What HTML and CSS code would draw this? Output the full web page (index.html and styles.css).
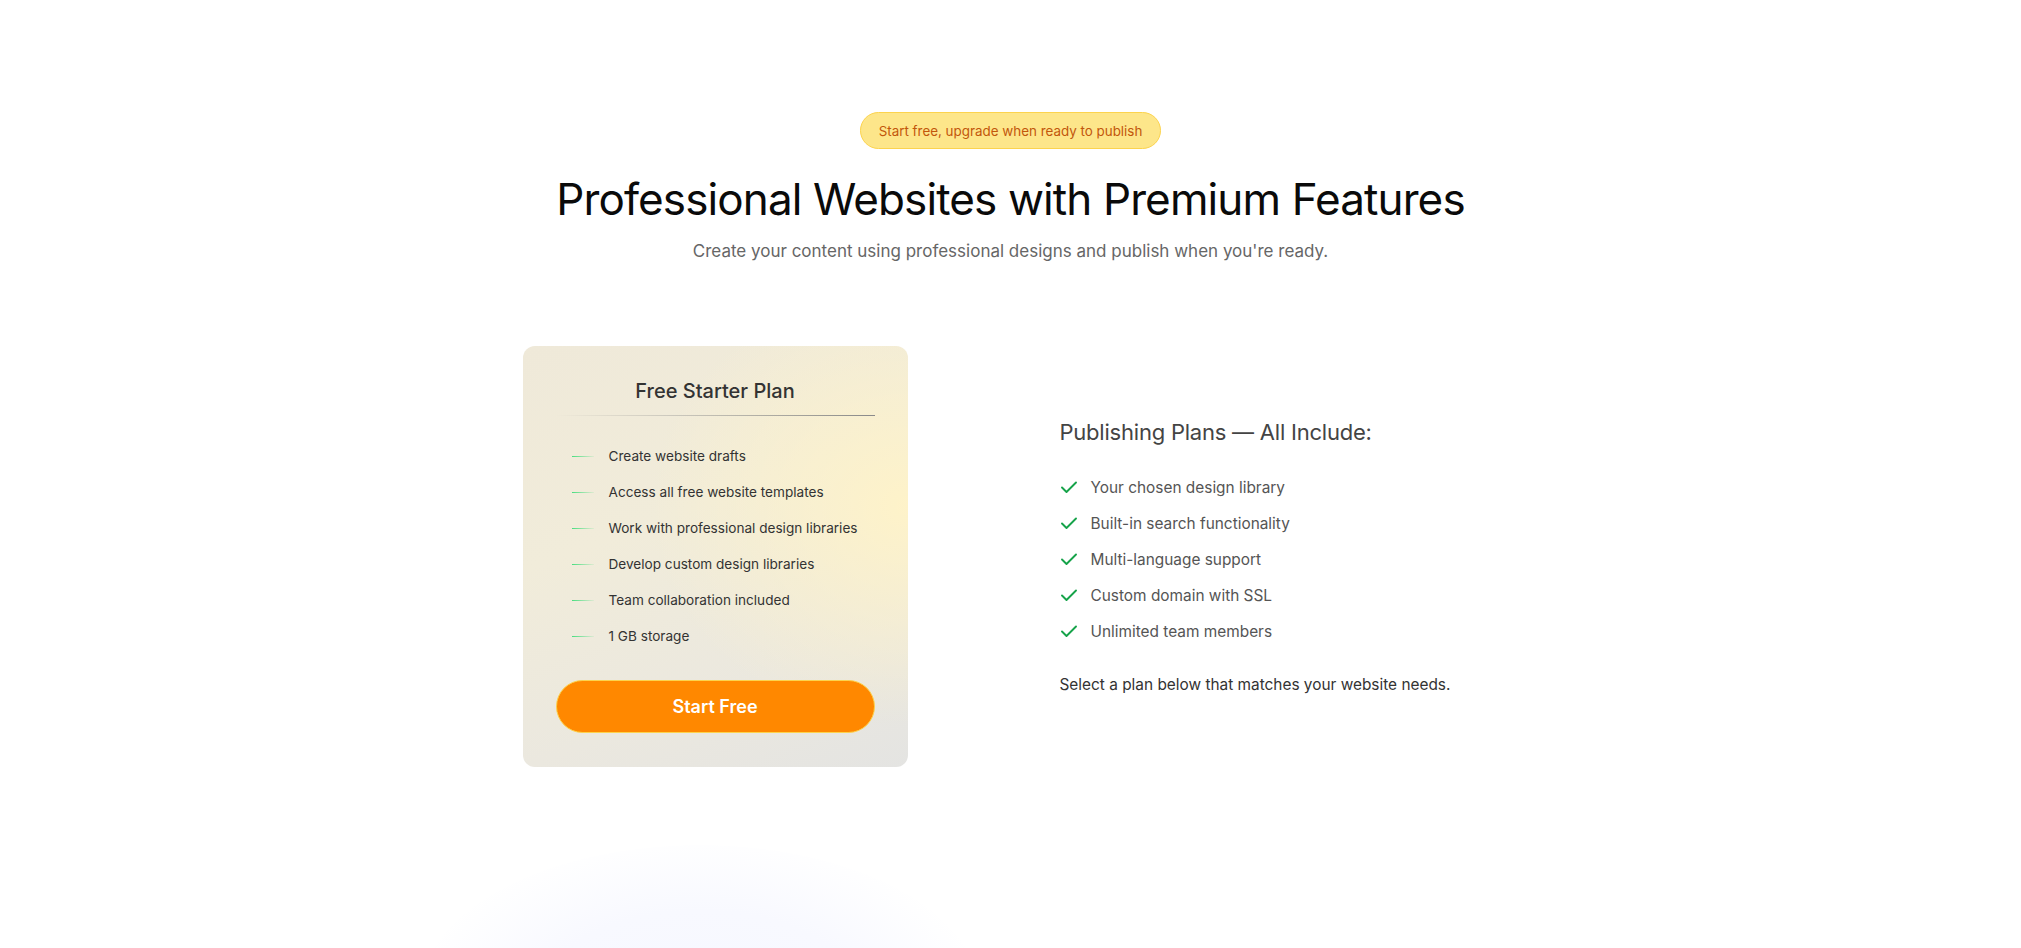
FILE: index.html
```html
<!DOCTYPE html>
<html lang="en">
<head>
<meta charset="utf-8">
<title>Pricing</title>
<link rel="stylesheet" href="styles.css">
</head>
<body>
<main class="page">
  <header class="hero">
    <span class="badge">Start free, upgrade when ready to publish</span>
    <h1 class="title">Professional Websites with Premium Features</h1>
    <p class="subtitle">Create your content using professional designs and publish when you're ready.</p>
  </header>

  <section class="plans">
    <div class="card">
      <h2 class="card-title">Free Starter Plan</h2>
      <div class="card-rule"></div>
      <ul class="card-list">
        <li><span class="dash"></span>Create website drafts</li>
        <li><span class="dash"></span>Access all free website templates</li>
        <li><span class="dash"></span>Work with professional design libraries</li>
        <li><span class="dash"></span>Develop custom design libraries</li>
        <li><span class="dash"></span>Team collaboration included</li>
        <li><span class="dash"></span>1 GB storage</li>
      </ul>
      <button class="cta">Start Free</button>
    </div>

    <div class="include">
      <h3 class="include-title">Publishing Plans — All Include:</h3>
      <ul class="include-list">
        <li><svg class="check" viewBox="0 0 16 12"><path d="M1 6.5l4.5 4.5L15 1.5"/></svg>Your chosen design library</li>
        <li><svg class="check" viewBox="0 0 16 12"><path d="M1 6.5l4.5 4.5L15 1.5"/></svg>Built-in search functionality</li>
        <li><svg class="check" viewBox="0 0 16 12"><path d="M1 6.5l4.5 4.5L15 1.5"/></svg>Multi-language support</li>
        <li><svg class="check" viewBox="0 0 16 12"><path d="M1 6.5l4.5 4.5L15 1.5"/></svg>Custom domain with SSL</li>
        <li><svg class="check" viewBox="0 0 16 12"><path d="M1 6.5l4.5 4.5L15 1.5"/></svg>Unlimited team members</li>
      </ul>
      <p class="include-note">Select a plan below that matches your website needs.</p>
    </div>
  </section>

  <div class="glow"></div>
</main>
</body>
</html>
```

FILE: styles.css
```css
* { box-sizing: border-box; }

html, body {
  margin: 0;
  padding: 0;
  background: #ffffff;
  font-family: Inter, "Noto Sans", sans-serif;
  color: #333;
  overflow: hidden;
}

.page {
  position: relative;
  height: 948px;
  overflow: hidden;
  padding-top: 112px;
  display: flex;
  flex-direction: column;
  align-items: center;
}

.hero {
  display: flex;
  flex-direction: column;
  align-items: center;
}

.badge {
  display: inline-flex;
  align-items: center;
  height: 37px;
  padding: 0 18px;
  border-radius: 999px;
  background: #fde68a;
  border: 1px solid #fcd34d;
  color: #c2570c;
  font-size: 13.4px;
}

.title {
  margin: 21px 0 0;
  font-size: 44px;
  line-height: 58px;
  font-weight: 400;
  letter-spacing: -0.02em;
  color: #0a0a0a;
}

.subtitle {
  margin: 9px 0 0;
  font-size: 17px;
  line-height: 28px;
  color: #666;
}

.plans {
  margin-top: 81px;
  display: flex;
  align-items: center;
  gap: 152px;
  width: 976px;
}

.card {
  width: 385px;
  height: 421px;
  flex: none;
  border-radius: 12px;
  padding: 31px 33px 0;
  background:
    radial-gradient(ellipse 260px 220px at 100% 38%, rgba(255, 243, 200, 0.95), rgba(255, 243, 200, 0) 100%),
    linear-gradient(160deg, #efe9d9 0%, #f1ecda 40%, #ebe8df 75%, #e4e4e2 100%);
  display: flex;
  flex-direction: column;
}

.card-title {
  margin: 0;
  text-align: center;
  font-size: 20px;
  line-height: 28px;
  font-weight: 500;
  color: #333;
}

.card-rule {
  margin-top: 10px;
  height: 1px;
  background: linear-gradient(90deg, rgba(120, 120, 120, 0) 0%, #8a8a8a 100%);
}

.card-list {
  list-style: none;
  margin: 22px 0 0;
  padding: 0 0 0 16px;
}

.card-list li {
  display: flex;
  align-items: center;
  height: 36px;
  font-size: 13.6px;
  color: #333;
}

.dash {
  width: 22px;
  height: 1px;
  margin-right: 15px;
  background: linear-gradient(90deg, #4ade80, rgba(74, 222, 128, 0.1));
}

.cta {
  margin-top: 26px;
  height: 53px;
  width: 100%;
  border-radius: 999px;
  border: 1px solid #fcd34d;
  background: #ff8800;
  color: #fff;
  font-family: Inter, "Noto Sans", sans-serif;
  font-size: 18px;
  font-weight: 600;
  cursor: pointer;
}

.include {
  flex: 1;
}

.include-title {
  margin: 0;
  font-size: 22px;
  line-height: 32px;
  font-weight: 400;
  letter-spacing: -0.01em;
  color: #444;
}

.include-list {
  list-style: none;
  margin: 21px 0 0;
  padding: 0;
}

.include-list li {
  display: flex;
  align-items: center;
  height: 36px;
  font-size: 15.4px;
  color: #555;
}

.check {
  width: 16px;
  height: 12px;
  margin: 0 14px 0 1px;
  fill: none;
  stroke: #16a34a;
  stroke-width: 1.9;
  stroke-linecap: round;
  stroke-linejoin: round;
}

.include-note {
  margin: 24px 0 0;
  font-size: 15.4px;
  line-height: 24px;
  color: #333;
}

.glow {
  position: absolute;
  left: 420px;
  top: 845px;
  width: 560px;
  height: 300px;
  border-radius: 50%;
  background: radial-gradient(ellipse at 50% 60%, #f5f7ff 0%, #f8f9ff 45%, rgba(255, 255, 255, 0) 75%);
}
```
